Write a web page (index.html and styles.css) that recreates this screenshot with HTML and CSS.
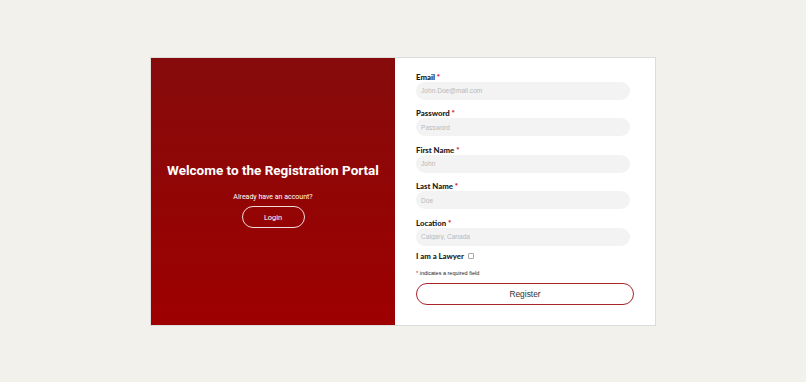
FILE: index.html
```html
<!DOCTYPE html>
<html lang="en">
<head>
	<meta charset="UTF-8" />
	<meta name="viewport" content="width=device-width, initial-scale=1.0"/>
	<title>Registration Portal</title>
	<link rel="stylesheet" href="styles.css">
</head>
<body>
<div class="card">
	<div class="welcome">
		<h2>Welcome to the Registration Portal</h2>
		<p class="have-account">Already have an account?</p>
		<button class="login-button">Login</button>
	</div>
	<form class="register-form">
		<div class="field">
			<label>Email <span class="req">*</span></label>
			<input type="text" class="input-box" placeholder="John.Doe@mail.com"/>
		</div>
		<div class="field">
			<label>Password <span class="req">*</span></label>
			<input type="password" class="input-box" placeholder="Password"/>
		</div>
		<div class="field">
			<label>First Name <span class="req">*</span></label>
			<input type="text" class="input-box" placeholder="John"/>
		</div>
		<div class="field">
			<label>Last Name <span class="req">*</span></label>
			<input type="text" class="input-box" placeholder="Doe"/>
		</div>
		<div class="field">
			<label>Location <span class="req">*</span></label>
			<input type="text" class="input-box" placeholder="Calgary, Canada"/>
		</div>
		<div class="lawyer-row">
			<label>I am a Lawyer</label>
			<input type="checkbox" class="check"/>
		</div>
		<p class="required-note"><span class="req">*</span> indicates a required field</p>
		<button type="button" class="register-button">Register</button>
	</form>
</div>
</body>
</html>
```

FILE: styles.css
```css
body, html {
	display: flex;
	justify-content: center;
	align-items: center;
	height: 100%;
	margin: 0;
	font-family: "Liberation Sans", Arial, sans-serif;
	background-color: #f3f1ec;
}
.card {
	display: flex;
	width: 506px;
	height: 269px;
	box-sizing: border-box;
	border: 1px solid #dcdcdc;
	background-color: #fff;
}
.welcome {
	width: 244px;
	display: flex;
	flex-direction: column;
	align-items: center;
	justify-content: center;
	padding-top: 8px;
	box-sizing: border-box;
	background: linear-gradient(to bottom, #860b0b, #9e0000);
	color: #fff;
}
.welcome h2 {
	margin: 0;
	font-family: Roboto, sans-serif;
	font-weight: 700;
	font-size: 13.5px;
}
.have-account {
	margin: 15px 0 0;
	font-family: Roboto, sans-serif;
	font-size: 7px;
}
.login-button {
	margin-top: 5px;
	width: 63px;
	height: 22px;
	border: 1.3px solid #f1dada;
	border-radius: 12px;
	background: transparent;
	color: #fff;
	font-family: Roboto, sans-serif;
	font-size: 7.4px;
}
.register-form {
	flex: 1;
	margin: 0;
	padding: 14px 0 0 21px;
}
.field {
	margin-bottom: 8.5px;
}
.field label, .lawyer-row label {
	display: block;
	height: 10px;
	line-height: 10px;
	font-family: Lato, sans-serif;
	font-weight: 900;
	font-size: 7.8px;
	color: #1a1a1a;
}
.req {
	color: #d0102a;
}
.input-box {
	display: block;
	width: 214px;
	height: 18px;
	box-sizing: border-box;
	padding: 0 5px;
	border: none;
	border-radius: 9px;
	background-color: #f3f3f3;
	font-family: "Liberation Sans", Arial, sans-serif;
	font-size: 6.6px;
}
.input-box::placeholder {
	color: #b9b9b9;
}
.lawyer-row {
	display: flex;
	align-items: center;
	gap: 4px;
	margin-top: -3px;
}
.check {
	appearance: none;
	margin: 0;
	width: 6px;
	height: 6px;
	border: 0.8px solid #a8a8a8;
	border-radius: 1px;
	background: #fff;
}
.required-note {
	margin: 9px 0 0;
	font-size: 5.5px;
	color: #222;
}
.register-button {
	margin-top: 7px;
	width: 218px;
	height: 22px;
	border: 1.4px solid #a8252a;
	border-radius: 11px;
	background: #fff;
	font-family: "Liberation Sans", Arial, sans-serif;
	font-size: 8.4px;
	color: #333;
}
```
